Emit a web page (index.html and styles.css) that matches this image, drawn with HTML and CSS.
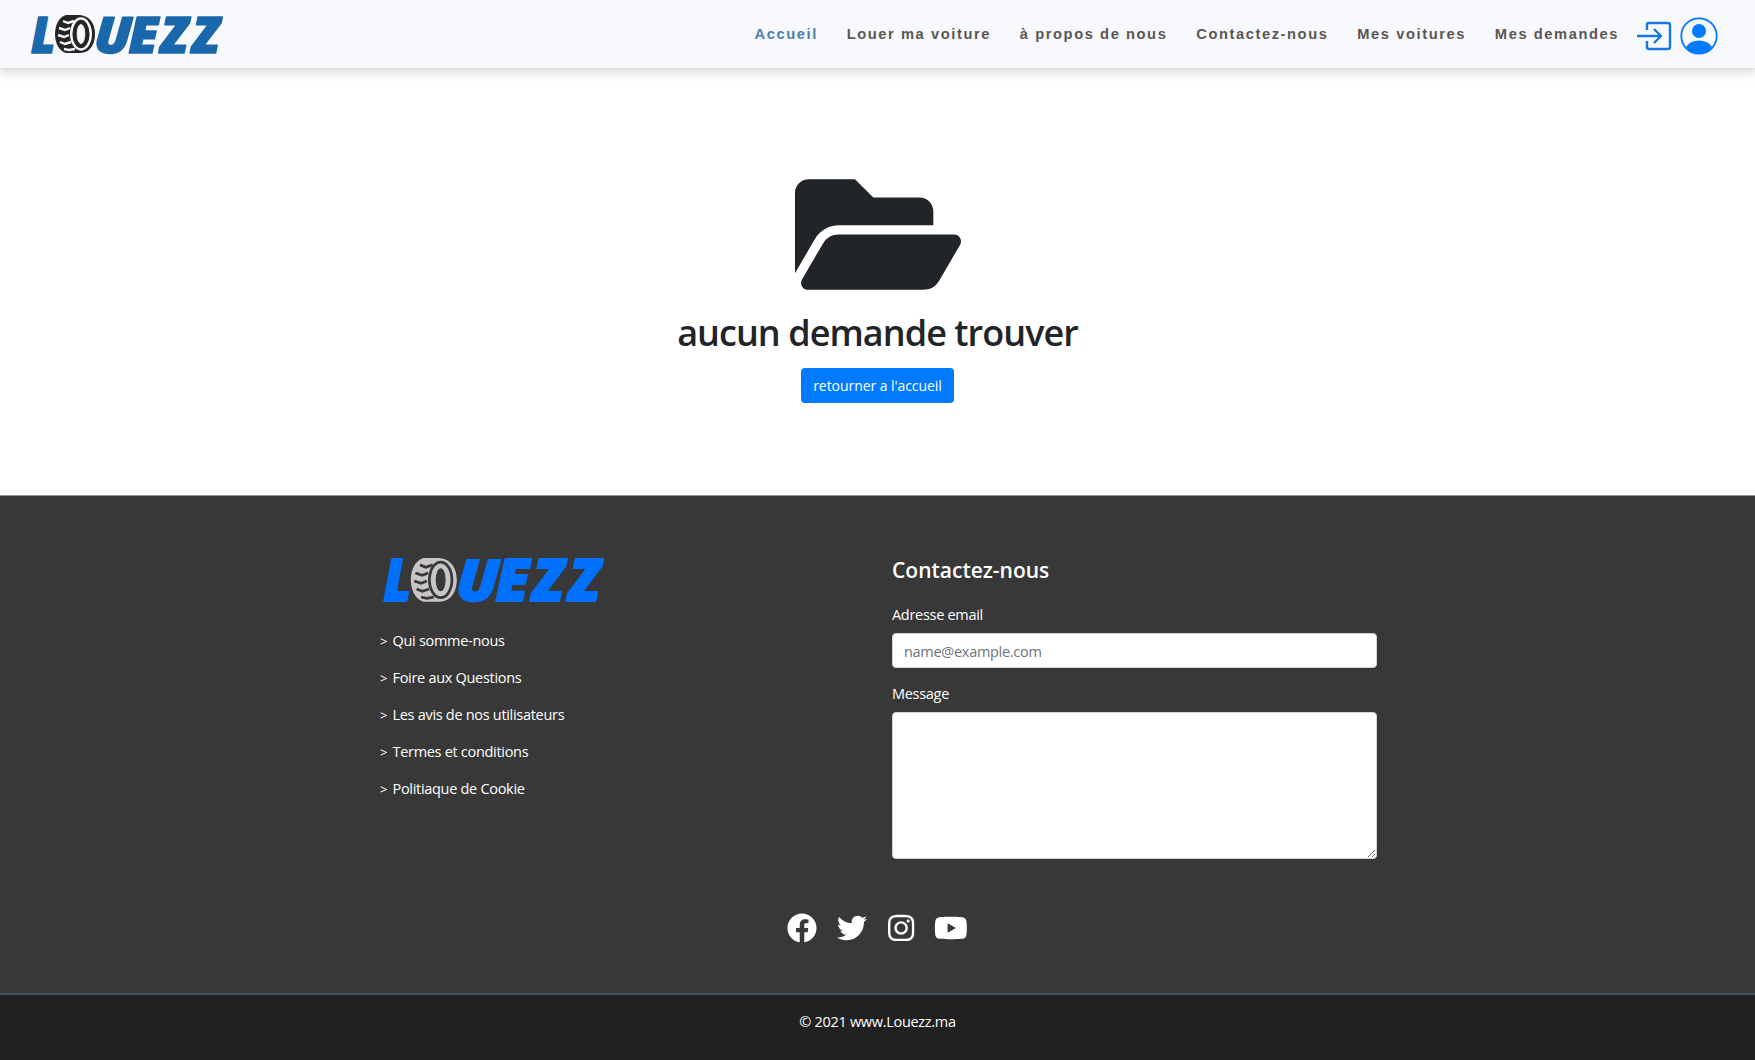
FILE: index.html
```html
<!DOCTYPE html>
<html lang="fr">
<head>
<meta charset="utf-8">
<title>Louezz</title>
<link rel="stylesheet" href="styles.css">
</head>
<body>
<svg class="defs" aria-hidden="true">
  <symbol id="logo" viewBox="0 0 191 40" overflow="visible">
    <g class="letters">
      <text transform="translate(0 37.500) scale(.92 1)">L</text>
      <text transform="translate(62.500 37.500) skewX(-3) scale(1.060 1)">U</text>
      <text transform="translate(97.500 37.500) scale(1.06 1)">E</text>
      <text transform="translate(130 37.500) scale(1 1)">Z</text>
      <text transform="translate(161.500 37.500) scale(1 1)">Z</text>
    </g>
    <path class="tire" d="M35 0H49C59 1 64 9 64 19S59 38 49 38H35C28 36 24 28 24 19S28 2 35 0Z"/>
    <path class="tread" d="M32 6l5 2 6-2M28 13l6 2 5-2M27 20l6 2 5-2M29 27l5 2 6-2M33 34l5 1 6-1"/>
    <ellipse class="tread" cx="50" cy="19" rx="9.800" ry="15.5"/>
    <ellipse class="hub" cx="50" cy="19" rx="3.8" ry="9.500"/>
  </symbol>
</svg>
<header class="navbar">
  <svg class="logo"><use href="#logo"/></svg>
  <nav class="menu">
    <a class="active">Accueil</a><a>Louer ma voiture</a><a>à propos de nous</a><a>Contactez-nous</a><a>Mes voitures</a><a>Mes demandes</a>
  </nav>
  <svg class="login" viewBox="0 0 36 30"><path d="M11 9V3.500Q11 2 12.500 2H32Q34 2 34 4V26Q34 28 32 28H13Q11 28 11 26V20M1 15H24M18 8l7 7-7 7"/></svg>
  <svg class="user" viewBox="0 0 38 38"><circle class="ring" cx="19" cy="19" r="17.700"/><circle cx="19" cy="14" r="7"/><path d="M6 30Q10 23.500 19 23.500T32 30Q27 37 19 37T6 30Z"/></svg>
</header>
<main class="empty">
  <svg class="folder" viewBox="0 64 576 384"><path d="M572.694 292.093L500.27 416.248A63.997 63.997 0 0 1 444.989 448H45.025c-18.523 0-30.064-20.093-20.731-36.093l72.424-124.155A64 64 0 0 1 152 256h399.964c18.523 0 30.064 20.093 20.73 36.093zM152 224h328v-48c0-26.51-21.49-48-48-48H272l-64-64H48C21.49 64 0 85.49 0 112v278.046l69.077-118.418C86.214 242.25 117.989 224 152 224z"/></svg>
  <h1>aucun demande trouver</h1>
  <a class="btn">retourner a l'accueil</a>
</main>
<footer>
  <div class="columns">
    <div class="about">
      <svg class="logo"><use href="#logo"/></svg>
      <ul>
        <li><span>&gt;</span>Qui somme-nous</li>
        <li><span>&gt;</span>Foire aux Questions</li>
        <li><span>&gt;</span>Les avis de nos utilisateurs</li>
        <li><span>&gt;</span>Termes et conditions</li>
        <li><span>&gt;</span>Politiaque de Cookie</li>
      </ul>
    </div>
    <form class="contact">
      <h2>Contactez-nous</h2>
      <label for="email">Adresse email</label>
      <input id="email" type="email" placeholder="name@example.com">
      <label for="message">Message</label>
      <textarea id="message"></textarea>
    </form>
  </div>
  <div class="social">
    <svg viewBox="0 0 512 512" width="30" height="30"><path d="M504 256C504 119 393 8 256 8S8 119 8 256c0 123.780 90.690 226.380 209.250 245V327.690h-63V256h63v-54.640c0-62.150 37-96.480 93.670-96.480 27.140 0 55.520 4.840 55.520 4.840v61h-31.280c-30.800 0-40.410 19.120-40.410 38.730V256h68.780l-11 71.690h-57.780V501C413.310 482.380 504 379.780 504 256z"/></svg>
    <svg viewBox="0 0 512 512" width="30" height="30"><path d="M459.37 151.716c.325 4.548.325 9.097.325 13.645 0 138.72-105.583 298.558-298.558 298.558-59.452 0-114.68-17.219-161.137-47.106 8.447.974 16.568 1.299 25.34 1.299 49.055 0 94.213-16.568 130.274-44.832-46.132-.975-84.792-31.188-98.112-72.772 6.498.974 12.995 1.624 19.818 1.624 9.421 0 18.843-1.3 27.614-3.573-48.081-9.747-84.143-51.98-84.143-102.985v-1.299c13.969 7.797 30.214 12.67 47.431 13.319-28.264-18.843-46.781-51.005-46.781-87.391 0-19.492 5.197-37.36 14.294-52.954 51.655 63.675 129.3 105.258 216.365 109.807-1.624-7.797-2.599-15.918-2.599-24.04 0-57.828 46.782-104.934 104.934-104.934 30.213 0 57.502 12.67 76.67 33.137 23.715-4.548 46.456-13.32 66.599-25.34-7.798 24.366-24.366 44.833-46.132 57.827 21.117-2.273 41.584-8.122 60.426-16.243-14.292 20.791-32.161 39.308-52.628 54.253z"/></svg>
    <svg viewBox="0 0 448 512" width="26.250" height="30"><path d="M224.1 141c-63.6 0-114.9 51.3-114.9 114.9s51.3 114.900 114.900 114.900S339 319.500 339 255.900 287.700 141 224.100 141zm0 189.600c-41.100 0-74.700-33.500-74.700-74.700s33.500-74.700 74.700-74.700 74.700 33.500 74.700 74.700-33.600 74.700-74.700 74.700zm146.400-194.300c0 14.900-12 26.800-26.800 26.800-14.900 0-26.800-12-26.800-26.800s12-26.800 26.800-26.800 26.800 12 26.800 26.800zm76.100 27.200c-1.700-35.900-9.900-67.700-36.200-93.900-26.200-26.200-58-34.400-93.900-36.200-37-2.100-147.900-2.100-184.900 0-35.800 1.700-67.600 9.900-93.900 36.100s-34.400 58-36.200 93.900c-2.100 37-2.100 147.900 0 184.900 1.700 35.900 9.900 67.700 36.200 93.900s58 34.400 93.900 36.200c37 2.100 147.900 2.100 184.900 0 35.900-1.700 67.700-9.900 93.900-36.200 26.200-26.200 34.400-58 36.200-93.900 2.100-37 2.100-147.800 0-184.800zM398.800 388c-7.800 19.600-22.900 34.700-42.600 42.600-29.500 11.700-99.500 9-132.100 9s-102.700 2.600-132.100-9c-19.600-7.800-34.700-22.900-42.600-42.600-11.700-29.500-9-99.500-9-132.100s-2.600-102.700 9-132.100c7.800-19.600 22.900-34.700 42.600-42.600 29.500-11.700 99.500-9 132.100-9s102.700-2.600 132.100 9c19.600 7.800 34.700 22.900 42.600 42.600 11.700 29.500 9 99.500 9 132.100s2.700 102.700-9 132.100z"/></svg>
    <svg viewBox="0 0 576 512" width="33.750" height="30"><path d="M549.655 124.083c-6.281-23.650-24.787-42.276-48.284-48.597C458.781 64 288 64 288 64S117.220 64 74.629 75.486c-23.497 6.322-42.003 24.947-48.284 48.597-11.412 42.867-11.412 132.305-11.412 132.305s0 89.438 11.412 132.305c6.281 23.650 24.787 41.500 48.284 47.821C117.220 448 288 448 288 448s170.780 0 213.371-11.486c23.497-6.321 42.003-24.171 48.284-47.821 11.412-42.867 11.412-132.305 11.412-132.305s0-89.438-11.412-132.305zm-317.510 213.508V175.185l142.739 81.205-142.739 81.201z"/></svg>
  </div>
  <div class="copyright">© 2021 www.Louezz.ma</div>
</footer>
</body>
</html>
```
FILE: styles.css
```css
* { box-sizing: border-box; }
body { margin: 0; height: 1060px; overflow: hidden; display: flex; flex-direction: column; background: #fff; color: #212529; font: 14.5px/24px "Open Sans", "Noto Sans", sans-serif; letter-spacing: -.3px; }
h1, h2, ul { margin: 0; padding: 0; font-weight: 600; }
svg { display: block; flex: none; overflow: visible; }
.defs { position: absolute; width: 0; height: 0; }
.navbar { height: 68px; flex: none; display: flex; align-items: flex-start; padding: 15px 37px 0 31px; background: #f7f9fc; box-shadow: 0 2px 10px 2px rgba(0,0,0,.17); }
.logo { width: 191px; height: 40px; fill: #1b67ab; stroke: #1b67ab; --tire: #252525; --line: #f7f9fc; }
.letters { font: italic 800 50px "Open Sans", sans-serif; letter-spacing: 0; stroke-width: 1.6; stroke-linejoin: round; }
.tire { fill: var(--tire); stroke: none; }
.tread { fill: none; stroke: var(--line); stroke-width: 2.4; }
.hub { fill: var(--line); stroke: var(--line); }
.menu { margin-left: auto; display: flex; gap: 28.9px; padding-top: 7px; font: bold 14.7px/24px "Liberation Sans", sans-serif; letter-spacing: 1.57px; color: #5a5654; white-space: nowrap; }
.active { color: #4b80ad; }
.login { width: 36px; height: 30px; margin: 6px 8px 0 17px; fill: none; stroke: #1677df; stroke-width: 2.4; stroke-linejoin: round; }
.user { width: 38px; height: 38px; margin-top: 2px; fill: #007bff; }
.ring { fill: none; stroke: #007bff; stroke-width: 1.8; }
.empty { height: 427px; flex: none; display: flex; flex-direction: column; align-items: center; padding-top: 111px; }
.folder { width: 166px; height: 111px; fill: #212529; }
h1 { margin-top: 19px; font-size: 36px; line-height: 48px; letter-spacing: -.95px; white-space: nowrap; }
.btn { margin-top: 11px; width: 153px; height: 35px; background: #007bff; color: #fff; border-radius: 4px; text-align: center; line-height: 36px; font-size: 14px; letter-spacing: -.06px; }
footer { flex: 1; display: flex; flex-direction: column; border-top: 1px solid #8c9393; background: #383838; color: #fff; }
.columns { display: grid; grid-template-columns: 512px 485px; padding: 62px 0 0 380px; }
.about .logo { width: 224px; height: 46px; margin-left: 1px; fill: #0070ff; stroke: #0070ff; --tire: #c9c5c4; --line: #383838; }
ul { list-style: none; margin-top: 25px; font-weight: 400; }
li { line-height: 24px; margin-bottom: 13px; display: flex; }
li span { width: 12.500px; font-size: 13px; }
.contact { display: flex; flex-direction: column; height: 302px; }
h2 { font-size: 21px; line-height: 24px; letter-spacing: 0; }
label { margin-top: 21px; line-height: 24px; }
input, textarea { display: block; width: 485px; flex: none; border: 1px solid #ced4da; border-radius: 4px; background: #fff; padding: 7px 11px 5px; font: inherit; letter-spacing: inherit; outline: none; }
input { height: 35px; margin-top: 6px; }
input::placeholder { color: #6c757d; }
input + label { margin-top: 14px; }
textarea { height: 147px; margin-top: 6px; resize: vertical; }
.social { display: flex; justify-content: center; gap: 20.4px; margin-top: 53px; fill: #fff; }
.copyright { margin-top: auto; height: 67px; border-top: 2px solid #3d5568; background: #212121; text-align: center; padding-top: 15px; line-height: 24px; }
```
